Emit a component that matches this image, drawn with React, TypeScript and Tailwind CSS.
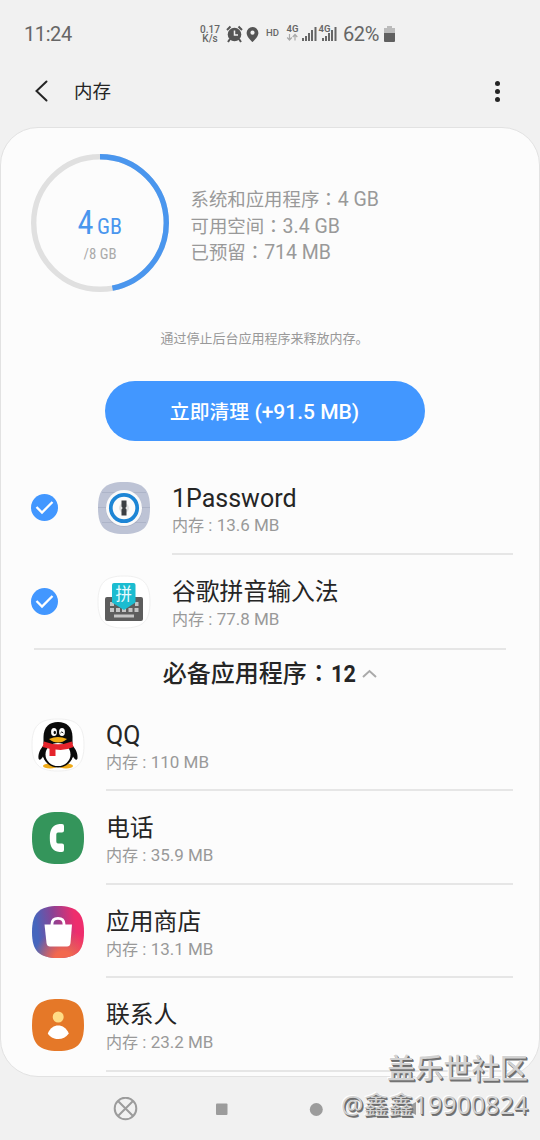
import { ReactNode } from "react";

const SQUIRCLE = "M0 26C0 7 7 0 26 0S52 7 52 26 45 52 26 52 0 45 0 26Z";

// Chinese glyphs are set a little smaller than the latin ones next to them
function Cn({ children }: { children: ReactNode }) {
  return <span className="text-[0.945em]">{children}</span>;
}

// The TC face centres the fullwidth colon in its box
function Colon() {
  return <span className="font-['Noto_Sans_CJK_TC',sans-serif]" lang="zh-TW">：</span>;
}

function StatusBar() {
  return (
    <div className="flex h-[66px] items-center pl-6 pt-[2px] text-[#666]">
      <span className="w-[174px] text-[20px] tracking-[-0.4px]">11:24</span>
      <div className="w-6 text-center text-[10px] font-medium">
        <div className="h-[9px] leading-[9px]">0.17</div>
        <div className="h-[9px] leading-[9px]">K/s</div>
      </div>
      <svg className="ml-[4px] h-[18px] w-[17px]" viewBox="0 0 17 18">
        <circle cx="8.500" cy="9.500" r="6.800" fill="#555" />
        <path d="M1 5L4.500 1.500M16 5L12.500 1.500M4 14L2 17M13 14L15 17" stroke="#555" strokeWidth="2" />
        <path d="M8.500 5.500V10H12" stroke="#f1f1f1" strokeWidth="1.500" fill="none" />
      </svg>
      <svg className="ml-[3px] h-[17px] w-[13px]" viewBox="0 0 13 17">
        <path d="M6.500 1A5.900 5.900 0 0 0 .6 6.900C.6 11 6.500 16 6.500 16S12.400 11 12.400 6.900A5.900 5.900 0 0 0 6.500 1Z" fill="#555" />
        <circle cx="6.500" cy="6.700" r="2.100" fill="#f1f1f1" />
      </svg>
      <span className="ml-[7px] mt-[-2px] text-[9.500px] font-medium">HD</span>
      <svg className="ml-[7px] h-[22px] w-[53px]" viewBox="0 0 53 22" fill="#666">
        <text x="0.500" y="9" fontSize="9.500" fontWeight="600" textLength="12">4G</text>
        <path d="M3.500 11V17M1.200 14.500L3.500 17 5.800 14.500M9 17.500V12M6.700 14L9 11.500 11.300 14" stroke="#aaa" fill="none" strokeWidth="1.200" />
        <path d="M16 15h2v3h-2zM19 13h2v5h-2zM22 10h2v8h-2zM25 7h2v11h-2zM28.500 4h2v14h-2z" />
        <text x="32.500" y="9" fontSize="9.500" fontWeight="600" textLength="12">4G</text>
        <path d="M36 15h2v3h-2zM39 13h2v5h-2zM42 10h2v8h-2zM45 7h2v11h-2zM48.500 4h2v14h-2z" />
      </svg>
      <span className="ml-[4px] text-[20px] tracking-[-0.4px]">62%</span>
      <svg className="ml-[5px] h-[16px] w-[11px]" viewBox="0 0 11 16">
        <path d="M3 0h5v2h3v5H0V2h3z" fill="#bbb" />
        <path d="M0 7h11v8a1 1 0 0 1-1 1H1a1 1 0 0 1-1-1z" fill="#606060" />
      </svg>
    </div>
  );
}

function TitleBar() {
  return (
    <header className="flex h-[61px] items-start justify-between pl-[34px] pr-[40px] pt-[12px] text-[#252525]">
      <div className="flex h-[26px] items-center">
        <svg className="h-[22px] w-[15px]" viewBox="0 0 15 22">
          <path d="M12.500 1.500L2.500 11 12.500 20.500" fill="none" stroke="#252525" strokeWidth="2" strokeLinecap="round" />
        </svg>
        <h1 className="ml-[25px] pt-[2px] text-[18.500px] leading-[26px]">内存</h1>
      </div>
      <div className="flex h-[26px] flex-col items-center justify-center gap-[3px]">
        <i className="size-[5px] rounded-full bg-[#252525]" />
        <i className="size-[5px] rounded-full bg-[#252525]" />
        <i className="size-[5px] rounded-full bg-[#252525]" />
      </div>
    </header>
  );
}

function Gauge() {
  return (
    <svg className="size-[140px]" viewBox="0 0 140 140" fontFamily="'Roboto Condensed', Roboto, sans-serif">
      <circle cx="70" cy="70" r="66.300" fill="none" stroke="#e0e0e0" strokeWidth="5.400" />
      <circle
        cx="70"
        cy="70"
        r="66.300"
        fill="none"
        stroke="#4a96ee"
        strokeWidth="5.400"
        pathLength="100"
        strokeDasharray="47 53"
        transform="rotate(-90 70 70)"
      />
      <text x="47.500" y="81" fontSize="32.500" fill="#4a96ee" textLength="16" lengthAdjust="spacingAndGlyphs">4</text>
      <text x="67" y="81" fontSize="22" fill="#4a96ee" textLength="25" lengthAdjust="spacingAndGlyphs">GB</text>
      <text x="53.500" y="105.500" fontSize="14.500" fill="#aaa" textLength="33" lengthAdjust="spacingAndGlyphs">/8 GB</text>
    </svg>
  );
}

function Check() {
  return (
    <svg className="mr-[40px] mt-[33px] size-[27px]" viewBox="0 0 27 27">
      <circle cx="13.500" cy="13.500" r="13.500" fill="#4297ff" />
      <path d="M5.500 13L11 18.500 21.500 8" fill="none" stroke="#fff" strokeWidth="2.300" />
    </svg>
  );
}

function OnePasswordIcon() {
  return (
    <>
      <path d={SQUIRCLE} fill="#bdc3d5" />
      <path d="M4 10.500H48M0 25.500H52M4 40.500H48" stroke="#adb4c8" />
      <circle cx="26" cy="26.700" r="18.300" fill="#9da4b8" opacity=".5" />
      <circle cx="26" cy="26" r="18" fill="#fafafa" />
      <circle cx="26" cy="26" r="13.200" fill="#fbfbfb" stroke="#1d85d5" strokeWidth="3.700" />
      <circle cx="26" cy="26" r="5" fill="#e3e3e3" />
      <path d="M23.500 18.500h5v6l-1.200 1.500 1.200 1.500v6h-5v-6l1.200-1.500-1.200-1.500z" fill="#3c3f43" />
    </>
  );
}

function PinyinIcon() {
  return (
    <>
      <path d={SQUIRCLE} fill="#fff" stroke="#f0f0f0" />
      <rect x="7" y="21" width="38" height="24" rx="2" fill="#5d5d5d" />
      <path
        d="M12 26h4v4h-4zM37 26h3.500v4H37zM12 32h4v4h-4zM18 32h4v4h-4zM24 32h4v4h-4zM30.500 32h4v4h-4zM36.500 32h4v4h-4zM16 38.500h20v3H16z"
        fill="#c4c4c4"
      />
      <path d="M16 7h19.500a2 2 0 0 1 2 2V26.500L26 34 14 26.500V9a2 2 0 0 1 2-2z" fill="#1bbcd0" />
      <text x="25.700" y="23.500" fontSize="16.500" textAnchor="middle" fill="#e9fbff">拼</text>
    </>
  );
}

function QQIcon() {
  return (
    <>
      <path d={SQUIRCLE} fill="#fff" stroke="#f0f0f0" />
      <ellipse cx="18" cy="47" rx="7" ry="2.500" fill="#efaa18" />
      <ellipse cx="34" cy="47" rx="7" ry="2.500" fill="#efaa18" />
      <path d="M12 26C8 30 6 35 6.500 39.500C7.500 42 9.500 40 11 37.500L13 41H39L41 37.500C42.500 40 44.500 42 45.500 39.500C46 35 44 30 40 26Z" fill="#0b0b0b" />
      <path d="M11.500 25V18C11.500 8 17.500 3 26 3S40.500 8 40.500 18V25Z" fill="#0b0b0b" />
      <ellipse cx="26" cy="35" rx="15" ry="13.500" fill="#0b0b0b" />
      <ellipse cx="26" cy="35.500" rx="12.500" ry="11.500" fill="#fff" />
      <ellipse cx="22" cy="13" rx="2.900" ry="4" fill="#fff" />
      <ellipse cx="30" cy="13" rx="2.900" ry="4" fill="#fff" />
      <ellipse cx="22.800" cy="13.500" rx="1.200" ry="1.700" fill="#111" />
      <path d="M28.500 14Q29.700 11.800 31.300 14" stroke="#111" fill="none" />
      <path d="M17 20Q26 16 35 20Q31 23.500 26 23.500T17 20Z" fill="#f1ae16" />
      <path d="M12 22.500Q26 28 40 22.500L41.500 28Q33 32 23.500 30.500V37H17.500V29.800L10.500 28Z" fill="#e5242c" />
    </>
  );
}

function PhoneIcon() {
  return (
    <>
      <path d={SQUIRCLE} fill="#34955b" />
      <path
        d="M27.500 12H30Q32 12 32 14V18.500Q32 20.500 30 20.500H26Q24.300 20.500 24.300 22.500V29.500Q24.300 31.500 26 31.500H30Q32 31.500 32 33.500V38Q32 40 30 40H27.500C20.500 39 17.800 35 17.800 26S20.500 13 27.500 12Z"
        fill="#fff"
      />
    </>
  );
}

function StoreIcon() {
  return (
    <>
      <defs>
        <linearGradient id="store" x1="0" y1=".55" x2="1" y2=".4">
          <stop offset=".1" stopColor="#4666bd" />
          <stop offset=".45" stopColor="#8b4394" />
          <stop offset=".85" stopColor="#ee2d6d" />
        </linearGradient>
        <radialGradient id="glow" cx=".6" cy="1.050" r=".6">
          <stop offset=".3" stopColor="#f2694f" />
          <stop offset="1" stopColor="#f2694f" stopOpacity="0" />
        </radialGradient>
      </defs>
      <path d={SQUIRCLE} fill="url(#store)" />
      <path d={SQUIRCLE} fill="url(#glow)" />
      <path d="M12.500 18.500H40L38.500 37Q38 40.500 35 40.500H18Q15 40.500 14.500 37Z" fill="#fff" />
      <path d="M20 19.500V18Q20 12.300 26 12.300T32 18V19.500" fill="none" stroke="#fff" strokeWidth="2.800" />
    </>
  );
}

function ContactsIcon() {
  return (
    <>
      <path d={SQUIRCLE} fill="#e57828" />
      <circle cx="26.200" cy="18" r="5.500" fill="#ffdc86" />
      <path d="M15.800 34.500C18 29 22 26.500 26.200 26.500S34.500 29 36.800 34.500C34 38.500 30.500 40 26.200 40S18.500 38.500 15.800 34.500Z" fill="#fff" />
    </>
  );
}

type App = { name: string; size: string; icon: ReactNode; latin?: boolean; checked?: boolean };

const background: App[] = [
  { name: "1Password", size: "13.6 MB", icon: <OnePasswordIcon />, latin: true, checked: true },
  { name: "谷歌拼音输入法", size: "77.8 MB", icon: <PinyinIcon />, checked: true },
];

const essential: App[] = [
  { name: "QQ", size: "110 MB", icon: <QQIcon />, latin: true },
  { name: "电话", size: "35.9 MB", icon: <PhoneIcon /> },
  { name: "应用商店", size: "13.1 MB", icon: <StoreIcon /> },
  { name: "联系人", size: "23.2 MB", icon: <ContactsIcon /> },
];

function AppRow({ app, last }: { app: App; last?: boolean }) {
  return (
    <li className={"flex h-[93.6px] items-start pr-[26px] " + (app.checked ? "pl-[30px]" : "pl-[31px]")}>
      {app.checked && <Check />}
      <svg className="mt-[21px] size-[52px] shrink-0 overflow-visible" viewBox="0 0 52 52">
        {app.icon}
      </svg>
      <div className={"ml-[22px] h-full flex-1 pt-[21px] " + (last ? "" : "border-b-2 border-[#e6e6e6]")}>
        <div className={"h-[31px] leading-[33px] text-[#252525] " + (app.latin ? "text-[25px]" : "text-[23.8px]")}>{app.name}</div>
        <div className="h-6 text-[17px] leading-6 text-[#999]">
          <Cn>内存</Cn> : {app.size}
        </div>
      </div>
    </li>
  );
}

export default function App() {
  return (
    <div className="relative h-[1140px] w-[540px] overflow-hidden bg-[#f1f1f1] font-[Roboto,'Noto_Sans_CJK_SC',sans-serif]">
      <StatusBar />
      <TitleBar />
      <main className="h-[950px] overflow-hidden rounded-[38px] border border-[#e2e2e2] bg-[#fcfcfc]">
        <section className="flex pl-[29px] pt-[25px]">
          <Gauge />
          <div className="ml-[20.500px] pt-[32px] text-[19.500px] leading-[26.500px] text-[#999]">
            <p className="h-[26.500px]"><Cn>系统和应用程序<Colon /></Cn>4 GB</p>
            <p className="h-[26.500px]"><Cn>可用空间<Colon /></Cn>3.4 GB</p>
            <p className="h-[26.500px]"><Cn>已预留<Colon /></Cn>714 MB</p>
          </div>
        </section>
        <p className="mt-[36px] pl-[159.500px] text-[13px] leading-[20px] text-[#999]">通过停止后台应用程序来释放内存。</p>
        <button className="ml-[103.500px] mt-[32px] block h-[60px] w-[320px] rounded-full bg-[#4297ff] pt-[2px] text-[21px] font-medium leading-[58px] text-white">
          <Cn>立即清理</Cn> (+91.5 MB)
        </button>
        <ul className="mt-[20px]">
          {background.map((app, i) => (
            <AppRow key={app.name} app={app} last={i === 1} />
          ))}
        </ul>
        <div className="mx-[33px] flex h-[49.5px] items-center justify-center border-t-2 border-[#e6e6e6] pb-px text-[#252525]">
          <span className="text-[24px] font-medium">必备应用程序<Colon /></span>
          <span className="origin-left scale-x-90 pt-[2px] text-[24px] font-bold">12</span>
          <svg className="ml-[4px] h-[9px] w-[15px]" viewBox="0 0 15 9">
            <path d="M1 8L7.500 2 14 8" fill="none" stroke="#aaa" strokeWidth="2" />
          </svg>
        </div>
        <ul>
          {essential.map((app) => (
            <AppRow key={app.name} app={app} />
          ))}
        </ul>
      </main>
      <nav className="flex h-[63px] items-center pl-[113px]">
        <svg className="h-6 w-[310px]" viewBox="0 0 310 24" fill="#9c9c9c">
          <circle cx="12.500" cy="11.500" r="10.800" fill="none" stroke="#9c9c9c" strokeWidth="2" />
          <path d="M5 4L20 19M20 4L5 19" stroke="#9c9c9c" strokeWidth="2" />
          <rect x="103" y="6.500" width="11.500" height="11.500" rx="1" />
          <circle cx="203.300" cy="12.500" r="6.500" />
          <path d="M303 5V18L292 11.500Z" />
        </svg>
      </nav>
      <div className="absolute bottom-[18px] right-[12px] text-right font-['Noto_Sans','Noto_Sans_CJK_SC',sans-serif] text-[#d2d2d2] [text-shadow:1px_1px_0_#6d6d6d,1.500px_1.500px_0_#777,-1px_-1px_0_#fff]">
        <div className="text-[28.2px] font-medium leading-[36px]">盖乐世社区</div>
        <div className="text-[25px] leading-[36px]">@鑫鑫19900824</div>
      </div>
    </div>
  );
}
